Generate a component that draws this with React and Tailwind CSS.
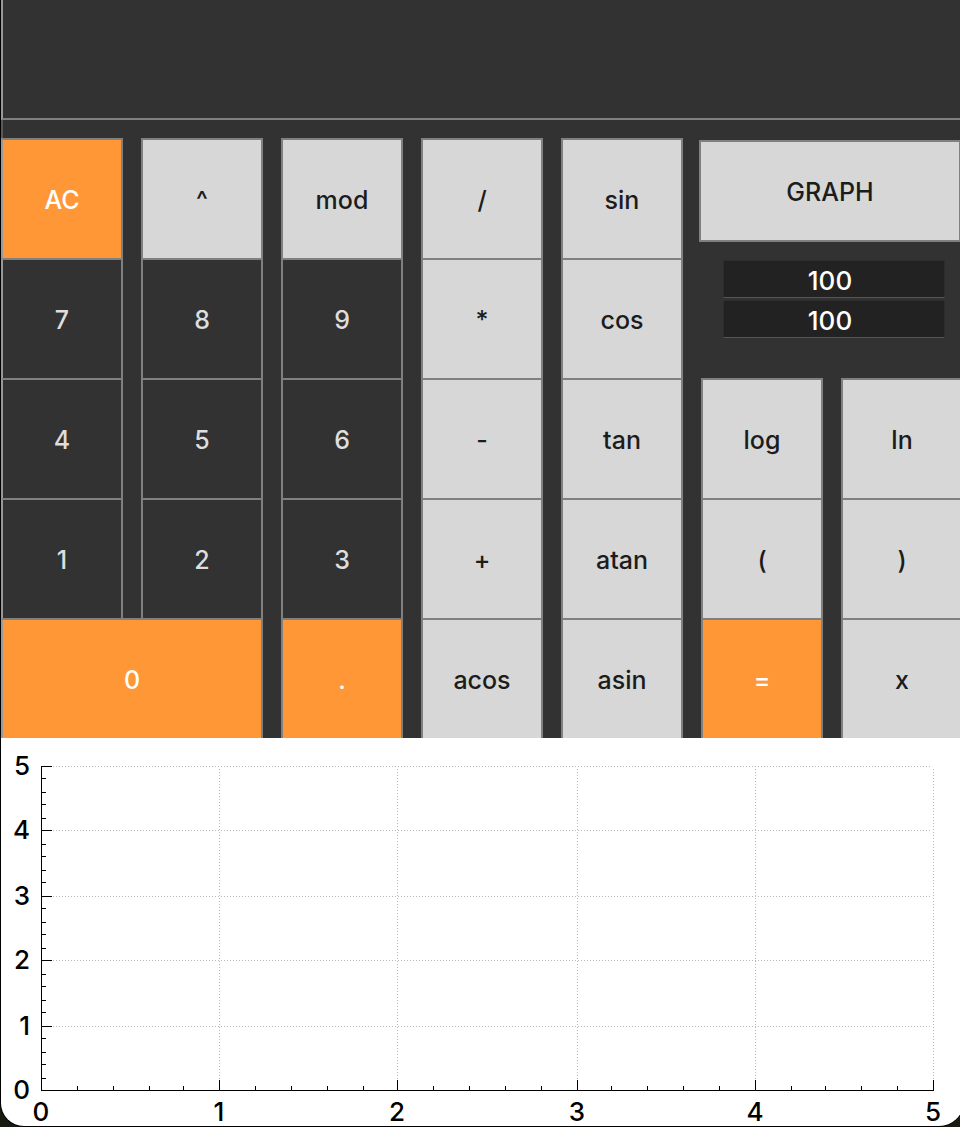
import React from "react";

const LIGHT = "bg-[#d7d7d7] text-[#1c1c1c]";
const DARK = "bg-[#323232] text-[#dedede]";
const ACCENT = "bg-[#ff9737] text-white";

const KEYS = [
  ["AC", ACCENT, "col-start-1 row-start-1"],
  ["^", LIGHT, "col-start-2 row-start-1"],
  ["mod", LIGHT, "col-start-3 row-start-1"],
  ["/", LIGHT, "col-start-4 row-start-1"],
  ["sin", LIGHT, "col-start-5 row-start-1"],
  ["7", DARK, "col-start-1 row-start-2"],
  ["8", DARK, "col-start-2 row-start-2"],
  ["9", DARK, "col-start-3 row-start-2"],
  ["*", LIGHT, "col-start-4 row-start-2"],
  ["cos", LIGHT, "col-start-5 row-start-2"],
  ["4", DARK, "col-start-1 row-start-3"],
  ["5", DARK, "col-start-2 row-start-3"],
  ["6", DARK, "col-start-3 row-start-3"],
  ["-", LIGHT, "col-start-4 row-start-3"],
  ["tan", LIGHT, "col-start-5 row-start-3"],
  ["log", LIGHT, "col-start-6 row-start-3"],
  ["ln", LIGHT, "col-start-7 row-start-3"],
  ["1", DARK, "col-start-1 row-start-4"],
  ["2", DARK, "col-start-2 row-start-4"],
  ["3", DARK, "col-start-3 row-start-4"],
  ["+", LIGHT, "col-start-4 row-start-4"],
  ["atan", LIGHT, "col-start-5 row-start-4"],
  ["(", LIGHT, "col-start-6 row-start-4"],
  [")", LIGHT, "col-start-7 row-start-4"],
  ["0", ACCENT, "col-start-1 col-span-2 row-start-5"],
  [".", ACCENT, "col-start-3 row-start-5"],
  ["acos", LIGHT, "col-start-4 row-start-5"],
  ["asin", LIGHT, "col-start-5 row-start-5"],
  ["=", ACCENT, "col-start-6 row-start-5"],
  ["x", LIGHT, "col-start-7 row-start-5"],
];

function Key({ label, tone, place }) {
  const edge = place.startsWith("col-start-1") ? "border-l-[#999999]" : "";
  return (
    <button
      type="button"
      className={`border-x-2 border-t-2 border-[#808080] pt-0.5 text-center text-[25px] font-medium ${tone} ${place} ${edge}`}
    >
      {label}
    </button>
  );
}

function RangeField({ label }) {
  return (
    <input
      type="text"
      aria-label={label}
      defaultValue="100"
      className="h-[38px] w-full border border-[#2d2d2d] border-b-[#555555] bg-[#222222] pr-2 pt-0.5 text-center font-medium text-white outline-none"
    />
  );
}

const xAt = (v) => 40 + 2 * Math.round((v * 178.4) / 2);
const yAt = (v) => 28 + 2 * Math.round(((5 - v) * 64.8) / 2);
const MAJOR = [0, 1, 2, 3, 4, 5];
const MINOR = Array.from({ length: 26 }, (_, i) => i).filter((i) => i % 5).map((i) => i / 5);

function Plot() {
  return (
    <svg viewBox="0 0 962 388" className="block w-full bg-white" role="img" aria-label="Graph">
      <g stroke="#b8b8b8" strokeDasharray="1 2" shapeRendering="crispEdges">
        {MAJOR.slice(1).map((v) => (
          <g key={v}>
            <path d={`M52 ${yAt(v) + 0.5}H930`} />
            <path d={`M${xAt(v) + 0.5} 31V342`} />
          </g>
        ))}
      </g>
      <g stroke="#000000" fill="none" shapeRendering="crispEdges">
        <path d="M40.5 28V352.5H933" />
        {MAJOR.map((v) => (
          <path key={v} d={`M40 ${yAt(v) + 0.5}H51M${xAt(v) + 0.5} 342V353`} />
        ))}
        {MINOR.map((v) => (
          <path key={v} d={`M40 ${yAt(v) + 0.5}H45M${xAt(v) + 0.5} 348V353`} />
        ))}
      </g>
      <g fill="#000000" fontSize="26" fontWeight="500">
        {MAJOR.map((v) => (
          <g key={v}>
            <text x="29" y={yAt(v) + 9} textAnchor="end">{v}</text>
            <text x={xAt(v)} y="383" textAnchor="middle">{v}</text>
          </g>
        ))}
      </g>
    </svg>
  );
}

export default function App() {
  return (
    <div className="overflow-hidden bg-[#181b12] font-['Inter','Liberation_Sans',sans-serif] text-[26px] leading-8">
      <main className="-mr-[3px] overflow-hidden rounded-b-[24px] border-b border-l border-black bg-[#323232]">
        <output
          aria-label="Result"
          className="block h-[120px] border-b-2 border-l-2 border-b-[#808080] border-l-[#999999]"
        />
        <div className="h-[18px] border-l-2 border-[#5a5a5a]" />
        <div className="grid grid-cols-7 grid-rows-[repeat(5,120px)] gap-x-[18px]">
          {KEYS.map(([label, tone, place]) => (
            <Key key={label} label={label} tone={tone} place={place} />
          ))}
          <div className="col-span-2 col-start-6 row-span-2 row-start-1 flex flex-col pt-0.5">
            <button
              type="button"
              className={`-ml-0.5 mr-0.5 h-[102px] border-2 border-[#808080] pt-0.5 text-[25px] font-medium ${LIGHT}`}
            >
              GRAPH
            </button>
            <div className="flex flex-col gap-0.5 pl-[22px] pr-[18px] pt-[18px]">
              <RangeField label="X range" />
              <RangeField label="Y range" />
            </div>
          </div>
        </div>
        <Plot />
      </main>
    </div>
  );
}
